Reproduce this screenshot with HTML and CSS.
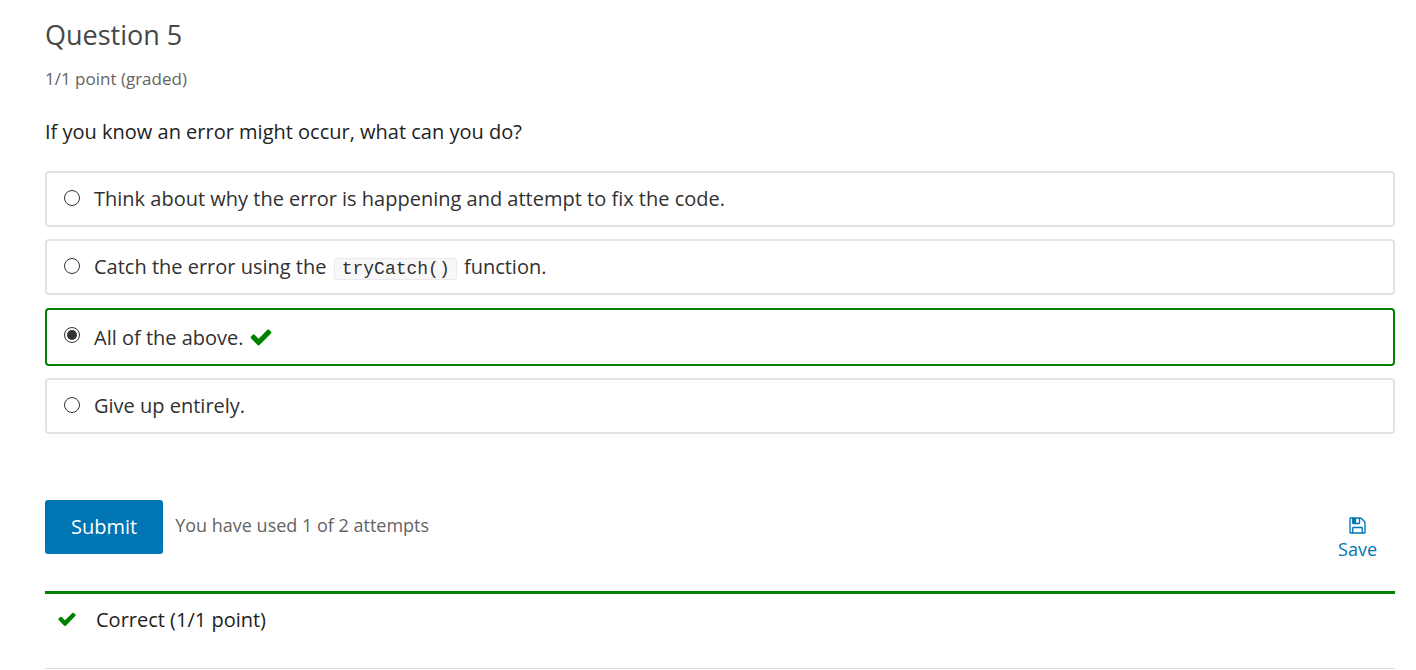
FILE: index.html
```html
<!DOCTYPE html>
<html lang="en">
<head>
<meta charset="utf-8">
<title>Question 5</title>
<link rel="stylesheet" href="styles.css">
</head>
<body>
<main class="problem">
  <h3 class="problem-title">Question 5</h3>
  <p class="problem-progress">1/1 point (graded)</p>
  <form class="problem-form">
    <fieldset class="choices">
      <legend class="prompt">If you know an error might occur, what can you do?</legend>
      <label class="choice"><input class="choice-radio" type="radio" name="answer"><span class="choice-text">Think about why the error is happening and attempt to fix the code.</span></label>
      <label class="choice"><input class="choice-radio" type="radio" name="answer"><span class="choice-text">Catch the error using the <code class="code">tryCatch()</code> function.</span></label>
      <label class="choice choice-correct"><input class="choice-radio" type="radio" name="answer" checked><span class="choice-text">All of the above.</span><svg class="check" viewBox="0 0 1792 1792" aria-hidden="true"><path d="M1671 566q0 40-28 68l-724 724-136 136q-28 28-68 28t-68-28l-136-136-362-362q-28-28-28-68t28-68l136-136q28-28 68-28t68 28l294 295 656-657q28-28 68-28t68 28l136 136q28 28 28 68z"/></svg></label>
      <label class="choice"><input class="choice-radio" type="radio" name="answer"><span class="choice-text">Give up entirely.</span></label>
    </fieldset>
    <div class="actions">
      <button class="submit" type="button">Submit</button>
      <span class="attempts">You have used 1 of 2 attempts</span>
      <button class="save" type="button"><svg class="save-icon" viewBox="0 0 1792 1792" aria-hidden="true"><path d="M512 1536h768v-384h-768v384zm896 0h128v-896q0-14-10-38.500t-20-34.500l-281-281q-10-10-34-20t-39-10v416q0 40-28 68t-68 28h-576q-40 0-68-28t-28-68v-416h-128v1280h128v-416q0-40 28-68t68-28h832q40 0 68 28t28 68v416zm-384-928v-320q0-13-9.500-22.500t-22.500-9.500h-192q-13 0-22.500 9.500t-9.500 22.500v320q0 13 9.500 22.500t22.500 9.500h192q13 0 22.500-9.500t9.500-22.500zm640 32v928q0 40-28 68t-68 28h-1344q-40 0-68-28t-28-68v-1344q0-40 28-68t68-28h928q40 0 88 20t76 48l280 280q28 28 48 76t20 88z"/></svg>Save</button>
    </div>
  </form>
  <div class="result">
    <svg class="check check-small" viewBox="0 0 1792 1792" aria-hidden="true"><path d="M1671 566q0 40-28 68l-724 724-136 136q-28 28-68 28t-68-28l-136-136-362-362q-28-28-28-68t28-68l136-136q28-28 68-28t68 28l294 295 656-657q28-28 68-28t68 28l136 136q28 28 28 68z"/></svg>
    <span>Correct (1/1 point)</span>
  </div>
</main>
</body>
</html>
```
FILE: styles.css
```css
* {
  box-sizing: border-box;
}

body {
  margin: 0;
  background: #fff;
  color: #222;
  font: 20px/28px "Open Sans", sans-serif;
}

.problem {
  margin: 0 21px 0 45px;
  padding-top: 17px;
}

.problem-title {
  margin: 0;
  color: #474747;
  font-size: 27px;
  line-height: 36px;
  font-weight: 400;
}

.problem-progress {
  margin: 14px 0 0;
  color: #646464;
  font-size: 17px;
  line-height: 24px;
}

.problem-form {
  padding-top: 27px;
}

.choices {
  display: flex;
  flex-direction: column;
  gap: 12px;
  margin: 0;
  padding: 0;
  border: 0;
}

.prompt {
  margin: 0 0 25px;
  padding: 0;
}

.choice {
  display: flex;
  align-items: center;
  padding: 12px 17px;
  border: 2px solid #e3e3e3;
  border-radius: 4px;
  color: #313131;
}

.choice-correct {
  margin-top: 1px;
  padding: 14px 17px 12px;
  border-color: #008100;
}

.choice-radio {
  appearance: none;
  flex: none;
  width: 16px;
  height: 16px;
  margin: 0 14px 2px 0;
  border: 1px solid #333;
  border-radius: 50%;
  background: #fff;
}

.choice-radio:checked {
  margin-bottom: 6px;
  padding: 2px;
  background: #333 content-box;
}

.code {
  margin: 0 2px;
  padding: 0 6px 0 7px;
  border: 1px solid #eaeaea;
  border-radius: 3px;
  background: #f8f8f8;
  font: 18px/20px "Liberation Mono", monospace;
}

.check {
  width: 24px;
  height: 24px;
  margin: 0 0 2px 5px;
  fill: #008100;
}

.actions {
  display: flex;
  align-items: flex-start;
  margin-top: 66px;
}

.submit {
  padding: 13px 26px;
  border: 0;
  border-radius: 3px;
  background: #0075b4;
  color: #fff;
  font: inherit;
}

.attempts {
  margin: 13px 0 0 12px;
  color: #646464;
  font-size: 18px;
  line-height: 24px;
}

.save {
  display: flex;
  flex-direction: column;
  align-items: center;
  gap: 2px;
  margin: 16px 18px 0 auto;
  padding: 0;
  border: 0;
  background: none;
  color: #0075b4;
  font: 18px/24px "Open Sans", sans-serif;
}

.save-icon {
  width: 19px;
  height: 19px;
  fill: #0075b4;
}

.result {
  display: flex;
  align-items: center;
  margin-top: 30px;
  padding: 12px 12px 34px;
  border-top: 3px solid #008100;
  border-bottom: 1px solid #ddd;
}

.check-small {
  width: 20px;
  height: 20px;
  margin: 0 19px 2px 0;
}
```
